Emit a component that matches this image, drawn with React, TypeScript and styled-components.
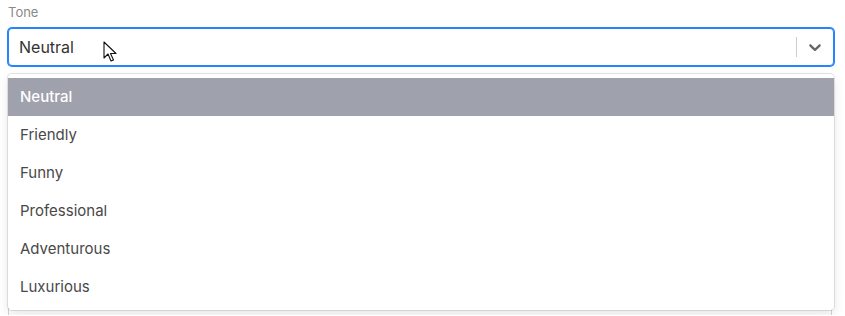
import React from "react";
import styled, { createGlobalStyle } from "styled-components";

const Global = createGlobalStyle`
  html, body { margin: 0; padding: 0; background: #fff; overflow: hidden; }
  body { font-family: Inter, "Noto Sans", sans-serif; }
`;

const Page = styled.div`
  padding: 4px 11px 0 8px;
  width: 826px;
`;

const Label = styled.div`
  font-size: 13px;
  line-height: 16px;
  color: #8a8a8a;
  margin-bottom: 8px;
`;

const SelectWrap = styled.div`
  position: relative;
`;

const Control = styled.div`
  box-sizing: border-box;
  height: 38px;
  display: flex;
  align-items: center;
  border: 1px solid #2684ff;
  box-shadow: 0 0 0 1px #2684ff;
  border-radius: 4px;
  background: #fff;
`;

const Value = styled.div`
  flex: 1;
  padding: 2px 8px 2px 10px;
  font-size: 16px;
  color: #333;
  position: relative;
`;

const Separator = styled.span`
  width: 1px;
  align-self: stretch;
  margin: 8px 0;
  background: #ccc;
`;

const Indicator = styled.div`
  display: flex;
  padding: 8px;
  color: #666;
`;

const Menu = styled.div`
  position: absolute;
  top: 100%;
  left: 0;
  right: 0;
  margin-top: 8px;
  background: #fff;
  border-radius: 4px;
  box-shadow: 0 0 0 1px hsla(0, 0%, 0%, 0.1), 0 4px 11px hsla(0, 0%, 0%, 0.1);
  padding: 4px 0;
  z-index: 2;
`;

const Option = styled.div<{ $active?: boolean }>`
  padding: 8px 12px;
  line-height: 22px;
  font-size: 15px;
  color: ${(p) => (p.$active ? "#fff" : "#484848")};
  background: ${(p) => (p.$active ? "#9fa1ad" : "transparent")};
  font-weight: ${(p) => (p.$active ? 500 : 400)};
`;

const NextField = styled.div`
  margin-top: 236px;
  height: 12px;
  border: 1px solid #d4d4d4;
  border-bottom: none;
  border-radius: 4px 4px 0 0;
  margin-right: 2px;
`;

const Cursor = styled.svg`
  position: absolute;
  left: 94px;
  top: 6px;
`;

const options = ["Neutral", "Friendly", "Funny", "Professional", "Adventurous", "Luxurious"];

export default function App() {
  return (
    <Page>
      <Global />
      <Label>Tone</Label>
      <SelectWrap>
        <Control>
          <Value>
            Neutral
            <Cursor width="14" height="22" viewBox="0 0 14 22">
              <path d="M1 1 L1 17 L5 13 L8 20 L10.5 19 L7.5 12.5 L13 12.5 Z" fill="#fff" stroke="#111" strokeWidth="1.1" strokeLinejoin="round" />
            </Cursor>
          </Value>
          <Separator />
          <Indicator>
            <svg width="20" height="20" viewBox="0 0 20 20" fill="currentColor">
              <path d="M4.516 7.548c0.436-0.446 1.043-0.481 1.576 0l3.908 3.747 3.908-3.747c0.533-0.481 1.141-0.446 1.574 0 0.436 0.445 0.408 1.197 0 1.615-0.406 0.418-4.695 4.502-4.695 4.502-0.217 0.223-0.502 0.335-0.787 0.335s-0.57-0.112-0.789-0.335c0 0-4.287-4.084-4.695-4.502s-0.436-1.17 0-1.615z" />
            </svg>
          </Indicator>
        </Control>
        <Menu>
          {options.map((o, i) => (
            <Option key={o} $active={i === 0}>
              {o}
            </Option>
          ))}
        </Menu>
      </SelectWrap>
      <NextField />
    </Page>
  );
}
